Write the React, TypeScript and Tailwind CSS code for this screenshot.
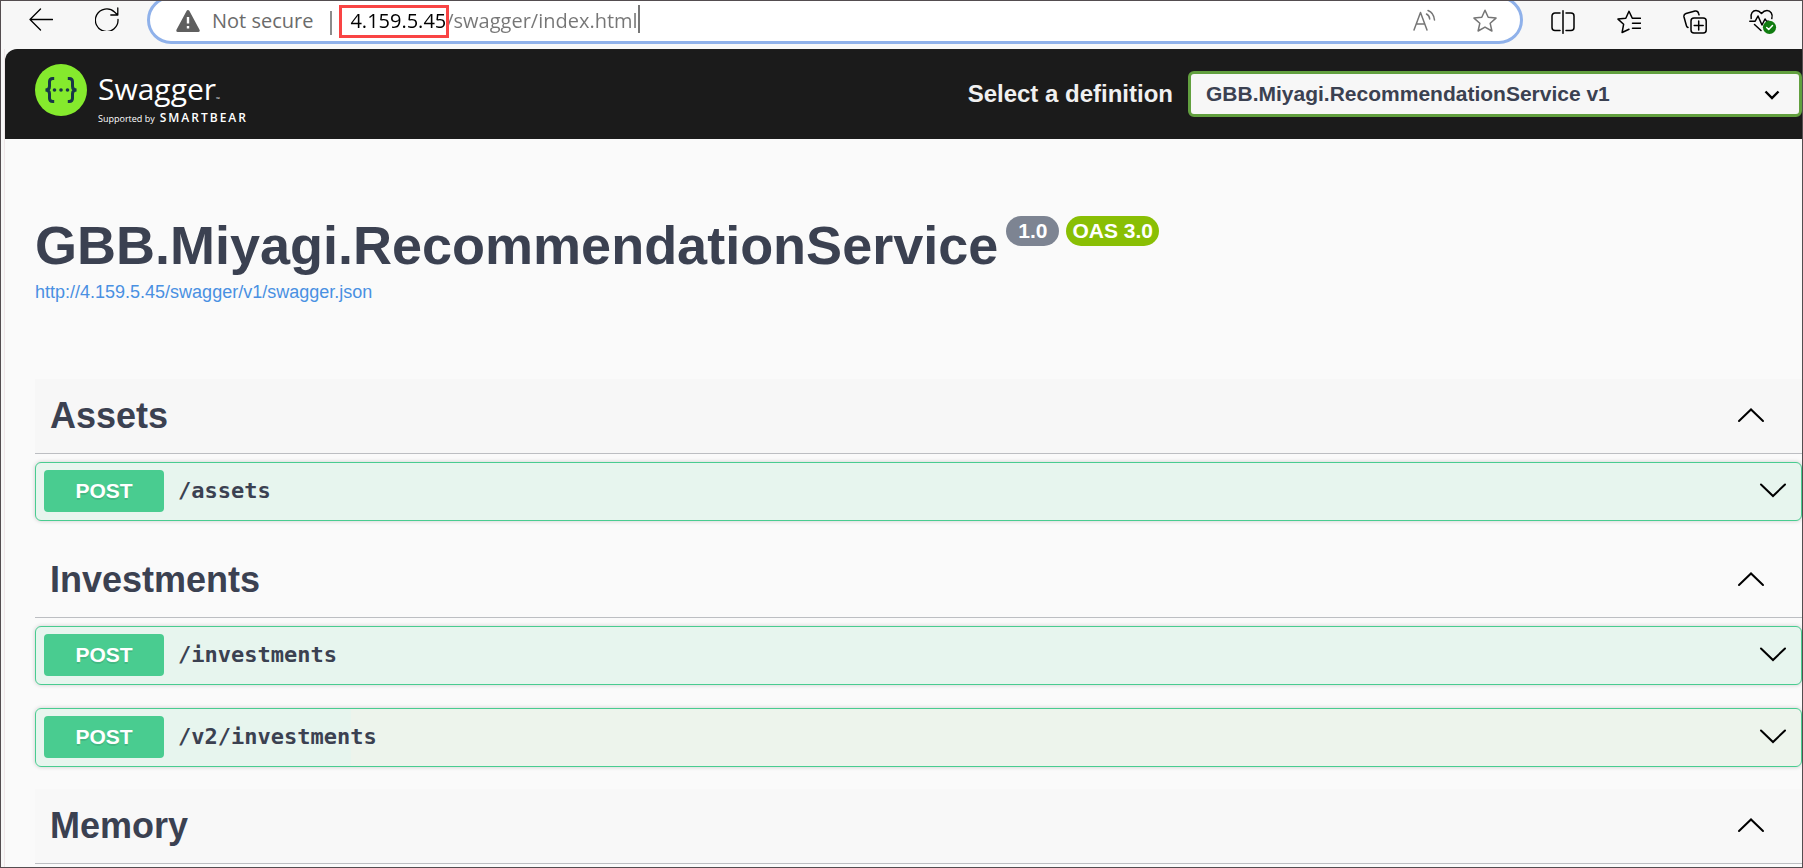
import type { ReactNode } from "react";

type Operation = { method: string; path: string; tone: string };
type Tag = { name: string; tone: string; operations: Operation[] };

const MINT = "bg-[#e7f5ee]";

const TAGS: Tag[] = [
  {
    name: "Assets",
    tone: "bg-[#f7f7f7]",
    operations: [{ method: "POST", path: "/assets", tone: MINT }],
  },
  {
    name: "Investments",
    tone: "bg-[#fafafa]",
    operations: [
      { method: "POST", path: "/investments", tone: MINT },
      {
        method: "POST",
        path: "/v2/investments",
        tone: "bg-[linear-gradient(to_right,#e7f5ee_315px,#edf4ec_315px)]",
      },
    ],
  },
  { name: "Memory", tone: "bg-[#f8f8f8]", operations: [] },
];

function Icon({ children, className = "size-6" }: { children: ReactNode; className?: string }) {
  return (
    <svg
      viewBox="0 0 24 24"
      className={`shrink-0 ${className}`}
      fill="none"
      stroke="currentColor"
      strokeWidth="1.5"
      strokeLinecap="round"
      strokeLinejoin="round"
      aria-hidden="true"
    >
      {children}
    </svg>
  );
}

const STAR = "M12 1.2l3.2 7.1 7.8.8-5.800 5.200 1.700 7.700-6.900-3.900L5.100 22l1.700-7.700L1 9.100l7.800-.8z";

function BrowserBar() {
  return (
    <header className="flex h-12 items-start overflow-hidden bg-[#f7f7f7] font-['Open_Sans','Noto_Sans',sans-serif]">
      <div className="flex w-[146px] shrink-0 gap-[42px] pt-[6px] pl-7 text-black">
        <button type="button" aria-label="Back">
          <Icon>
            <path d="M23.5 12.5H1M11.5 2L1 12.5 11.5 23" strokeWidth="1.3" />
          </Icon>
        </button>
        <button type="button" aria-label="Refresh">
          <Icon>
            <path d="M23 12.5A11.3 11.3 0 1 1 19.5 5L22.5 7.8M22.8 1v7h-7" strokeWidth="1.3" />
          </Icon>
        </button>
      </div>

      <div className="-mt-[5px] flex h-12 min-w-0 flex-1 items-center rounded-full border-3 border-[#8fb1ea] bg-white pt-px pr-[23px] pl-[26px] text-xl leading-7 text-[#6b6b6b]">
        <svg viewBox="0 0 24 24" className="size-6 shrink-0" aria-hidden="true">
          <path d="M12 2.5L22.2 21.5H1.8z" fill="#5f5f5f" stroke="#5f5f5f" strokeWidth="3" strokeLinejoin="round" />
          <path d="M12 8v6.5" stroke="#fff" strokeWidth="2.4" />
          <path d="M12 17v2.5" stroke="#fff" strokeWidth="2.4" />
        </svg>
        <span className="ml-3">Not secure</span>
        <span className="mt-1 ml-[17px] h-6 w-0.5 bg-[#8c8c8c]" />
        <div className="relative ml-[18px] flex items-center">
          <input
            type="text"
            aria-label="Address"
            defaultValue="4.159.5.45/swagger/index.html"
            className="field-sizing-content bg-[linear-gradient(to_right,#000_96px,#767676_96px)] bg-clip-text text-xl leading-7 text-transparent outline-none"
          />
          <span className="-mt-1 h-7 w-0.5 bg-[#777]" />
          <span className="pointer-events-none absolute -top-[2px] -left-[11px] h-[33px] w-[110px] border-3 border-[#f94444]" />
        </div>
        <div className="ml-auto flex gap-9 text-[#757575]">
          <button type="button" aria-label="Read aloud">
            <Icon>
              <path d="M1 21L7.5 3.5 14 21M3.5 15h8M13.5 5c1.8.9 3 2.6 3.2 5M15 1.5c3.5 1.3 6 4.8 6.5 9.500" />
            </Icon>
          </button>
          <button type="button" aria-label="Add to favorites">
            <Icon>
              <path d={STAR} />
            </Icon>
          </button>
        </div>
      </div>

      <div className="flex shrink-0 gap-[42px] pt-2 pr-[29px] pl-7 text-black">
        <button type="button" aria-label="Split screen">
          <Icon>
            <path d="M9 3H4A3 3 0 0 0 1 6v11.500a3 3 0 0 0 3 3h5M15 3h5a3 3 0 0 1 3 3v11.500a3 3 0 0 1-3 3h-5M12 .8v22.500" />
          </Icon>
        </button>
        <button type="button" aria-label="Favorites">
          <Icon>
            <path d="M23.500 8.300H15.300L12 1.200 8.800 8.300 1 9.100l5.600 5.200L5.100 22.500l6.900-3.300M15.500 13.200h8M15.500 18.200h8" />
          </Icon>
        </button>
        <button type="button" aria-label="Collections">
          <Icon>
            <rect x="8" y="8" width="15.2" height="15" rx="3" />
            <path d="M15.700 11v9M11.200 15.500h9M5 17.500a3 3 0 0 1-1.700-2.200L1 7a3 3 0 0 1 2-3.500L12 1a3 3 0 0 1 3.500 2.200l.5 1.600" />
          </Icon>
        </button>
        <button type="button" aria-label="Browser essentials" className="-mr-1">
          <svg
            viewBox="0 0 28 25"
            className="h-[25px] w-7 shrink-0"
            fill="none"
            stroke="currentColor"
            strokeWidth="1.5"
            strokeLinecap="round"
            strokeLinejoin="round"
            aria-hidden="true"
          >
            <path d="M2.200 9.500C1 4.500 4 1.500 7 1.500c2.500 0 4 1.200 5.500 3 1.500-1.800 3-3 5.500-3 3.500 0 6.200 3.500 4.800 8" />
            <path d="M.8 12.200h5.400L9 7l4 9 3-6 1.500 2.200h2M5.500 15.500l6.500 6" />
            <circle cx="20.500" cy="18.300" r="6.600" fill="#107c10" stroke="none" />
            <path d="M17.700 18.500l2 2 3.800-4" stroke="#fff" />
          </svg>
        </button>
      </div>
    </header>
  );
}

function SwaggerLogo() {
  return (
    <a href="#top" className="flex gap-[11px] pt-[15px] font-['Open_Sans','Noto_Sans',sans-serif] text-white">
      <svg viewBox="0 0 52 52" className="size-[52px] shrink-0" aria-hidden="true">
        <circle cx="26" cy="26" r="26" fill="#85ea2d" />
        <g fill="none" stroke="#173647" strokeWidth="3">
          <path d="M19.200 14.500h-1.400c-2.300 0-3.300 1.100-3.300 3.300v4.400c0 2.300-1 3.700-4 3.800 3 .1 4 1.500 4 3.800v4.400c0 2.200 1 3.300 3.300 3.300h1.400" />
          <path d="M32.800 14.500h1.400c2.300 0 3.300 1.100 3.300 3.300v4.400c0 2.300 1 3.700 4 3.800-3 .1-4 1.500-4 3.800v4.400c0 2.200-1 3.300-3.300 3.300h-1.400" />
        </g>
        <g fill="#173647">
          <circle cx="19.500" cy="26" r="1.800" />
          <circle cx="26" cy="26" r="1.800" />
          <circle cx="32.500" cy="26" r="1.800" />
        </g>
      </svg>
      <span className="flex flex-col pt-1">
        <span className="flex items-end">
          <span className="text-[30px] leading-[42px]">Swagger</span>
          <span className="text-[5px] leading-[22px]">™</span>
        </span>
        <span className="flex items-baseline gap-[5px] leading-4">
          <span className="text-[9px]">Supported by</span>
          <span className="text-xs leading-4 font-semibold tracking-[2px]">SMARTBEAR</span>
        </span>
      </span>
    </a>
  );
}

function TopBar() {
  return (
    <div id="top" className="flex h-[90px] items-start justify-between rounded-tl-xl bg-[#1b1b1b] pl-[30px]">
      <SwaggerLogo />
      <div className="flex items-center gap-[15px] pt-[22px]">
        <label htmlFor="definition" className="text-2xl leading-[46px] font-bold text-[#f0f0f0]">
          Select a definition
        </label>
        <div className="relative">
          <select
            id="definition"
            className="h-[46px] w-[614px] appearance-none rounded-md border-3 border-[#62a03f] bg-[#f7f7f7] pr-12 pl-[15px] text-[21px] font-bold text-[#3b4151]"
          >
            <option>GBB.Miyagi.RecommendationService v1</option>
          </select>
          <svg
            viewBox="0 0 16 10"
            className="pointer-events-none absolute top-[19px] right-[22px] h-[10px] w-4"
            fill="none"
            stroke="#000"
            strokeWidth="2.4"
            aria-hidden="true"
          >
            <path d="M1.500 1.500L8 8l6.500-6.500" />
          </svg>
        </div>
      </div>
    </div>
  );
}

function Chevron({ up = false }: { up?: boolean }) {
  return (
    <svg viewBox="0 0 28 16" className="h-4 w-7 shrink-0" fill="none" stroke="#000" strokeWidth="2" strokeLinecap="round" aria-hidden="true">
      <path d={up ? "M2 13L14 1.500l12 11.500" : "M2 1.500L14 13l12-11.500"} />
    </svg>
  );
}

function OperationRow({ method, path, tone }: Operation) {
  return (
    <button
      type="button"
      className={`flex h-[59px] w-full items-center rounded-md border border-[#49cc90] pr-3.5 pb-0.5 pl-2 text-left shadow-[0_0_4px_rgba(0,0,0,0.19)] ${tone}`}
    >
      <span className="h-[42px] w-[120px] rounded bg-[#49cc90] text-center text-[21px] leading-[42px] font-bold text-white [text-shadow:0_2px_0_rgba(0,0,0,0.1)]">
        {method}
      </span>
      <span className="ml-3.5 flex-1 font-['DejaVu_Sans_Mono',monospace] text-[22px] leading-7 font-bold text-[#3b4151]">
        {path}
      </span>
      <Chevron />
    </button>
  );
}

function TagSection({ name, tone, operations }: Tag) {
  return (
    <section>
      <h3>
        <button
          type="button"
          className={`mb-2 flex h-[75px] w-full items-center justify-between border-b border-[#bcbec2] pr-[37px] pb-px pl-[15px] text-left text-4xl font-bold text-[#3b4151] ${tone}`}
        >
          {name}
          <Chevron up />
        </button>
      </h3>
      <div className="flex flex-col gap-[23px]">
        {operations.map((operation) => (
          <OperationRow key={operation.path} {...operation} />
        ))}
      </div>
    </section>
  );
}

export default function App() {
  return (
    <div className="h-screen overflow-hidden border border-[#544d50] bg-[#f7f7f7] font-['Liberation_Sans',Arial,sans-serif]">
      <BrowserBar />
      <div className="ml-[3px] border-l border-[#efe6e8]">
        <TopBar />
        <main className="bg-[#fafafa] pt-[75px] pl-[30px]">
          <div className="flex items-start gap-2">
            <h1 className="text-[54px] leading-[62px] font-bold text-[#3b4151]">GBB.Miyagi.RecommendationService</h1>
            <div className="flex gap-[7px] pt-0.5 text-[21px] leading-[30px] font-bold text-white">
              <span className="rounded-full bg-[#7d8492] px-3">1.0</span>
              <span className="rounded-full bg-[#89bf04] px-[6px]">OAS 3.0</span>
            </div>
          </div>
          <a href="#spec" className="mt-1 block text-lg leading-6 text-[#4990e2]">
            http://4.159.5.45/swagger/v1/swagger.json
          </a>
          <div className="mt-[75px] flex flex-col gap-[22px]">
            {TAGS.map((tag) => (
              <TagSection key={tag.name} {...tag} />
            ))}
          </div>
        </main>
      </div>
    </div>
  );
}
